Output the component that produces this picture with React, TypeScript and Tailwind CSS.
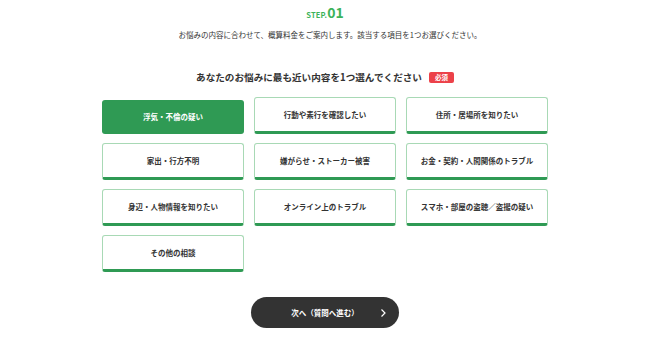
const options = [
  '浮気・不倫の疑い',
  '行動や素行を確認したい',
  '住所・居場所を知りたい',
  '家出・行方不明',
  '嫌がらせ・ストーカー被害',
  'お金・契約・人間関係のトラブル',
  '身辺・人物情報を知りたい',
  'オンライン上のトラブル',
  'スマホ・部屋の盗聴／盗撮の疑い',
  'その他の相談',
];

export default function App() {
  const selected = 0;
  return (
    <div
      className="min-h-[339px] w-[660px] bg-white pr-[10px] text-[#333]"
      style={{ fontFamily: '"Noto Sans CJK JP", "Noto Sans", sans-serif' }}
    >
      <div className="flex flex-col items-center">
        <div className="mt-[2px] flex items-baseline font-bold text-[#3cb35a]">
          <span className="text-[7.5px] tracking-[0.02em]">STEP.</span>
          <span className="text-[14px] leading-[20px]">01</span>
        </div>
        <p className="mt-[7px] pl-[10px] text-[7.5px] leading-[11px] text-[#333]">
          お悩みの内容に合わせて、概算料金をご案内します。該当する項目を1つお選びください。
        </p>
        <div className="mt-[30px] flex items-center gap-[7px]">
          <h2 className="text-[9.6px] font-bold leading-[14px] text-[#333]">
            あなたのお悩みに最も近い内容を1つ選んでください
          </h2>
          <span className="rounded-[2px] bg-[#ec4149] px-[6px] text-[6.5px] font-bold leading-[11px] text-white">
            必須
          </span>
        </div>

        <div className="mt-[13px] grid w-[446px] grid-cols-3 gap-x-[10px] gap-y-[9px]">
          {options.map((o, i) =>
            i === selected ? (
              <button
                key={o}
                className="mt-[3px] flex h-[34px] items-center justify-center rounded-[3px] bg-[#2f9a54] text-[7.5px] font-bold text-white"
              >
                {o}
              </button>
            ) : (
              <button
                key={o}
                className="flex h-[37px] items-center justify-center rounded-[3px] border border-b-[3px] border-[#a8d9b5] border-b-[#2f9a54] bg-white text-[7.5px] font-bold text-[#333]"
              >
                {o}
              </button>
            )
          )}
        </div>

        <button className="relative mt-[25px] flex h-[31px] w-[148px] items-center justify-center rounded-full bg-[#333] text-[7.5px] font-bold text-white">
          次へ（質問へ進む）
          <svg
            className="absolute right-[12px] top-1/2 -translate-y-1/2"
            width="8"
            height="10"
            viewBox="0 0 8 10"
            fill="none"
            stroke="white"
            strokeWidth="1.2"
          >
            <path d="M2.5 1.5 6 5l-3.5 3.5" />
          </svg>
        </button>
      </div>
    </div>
  );
}
